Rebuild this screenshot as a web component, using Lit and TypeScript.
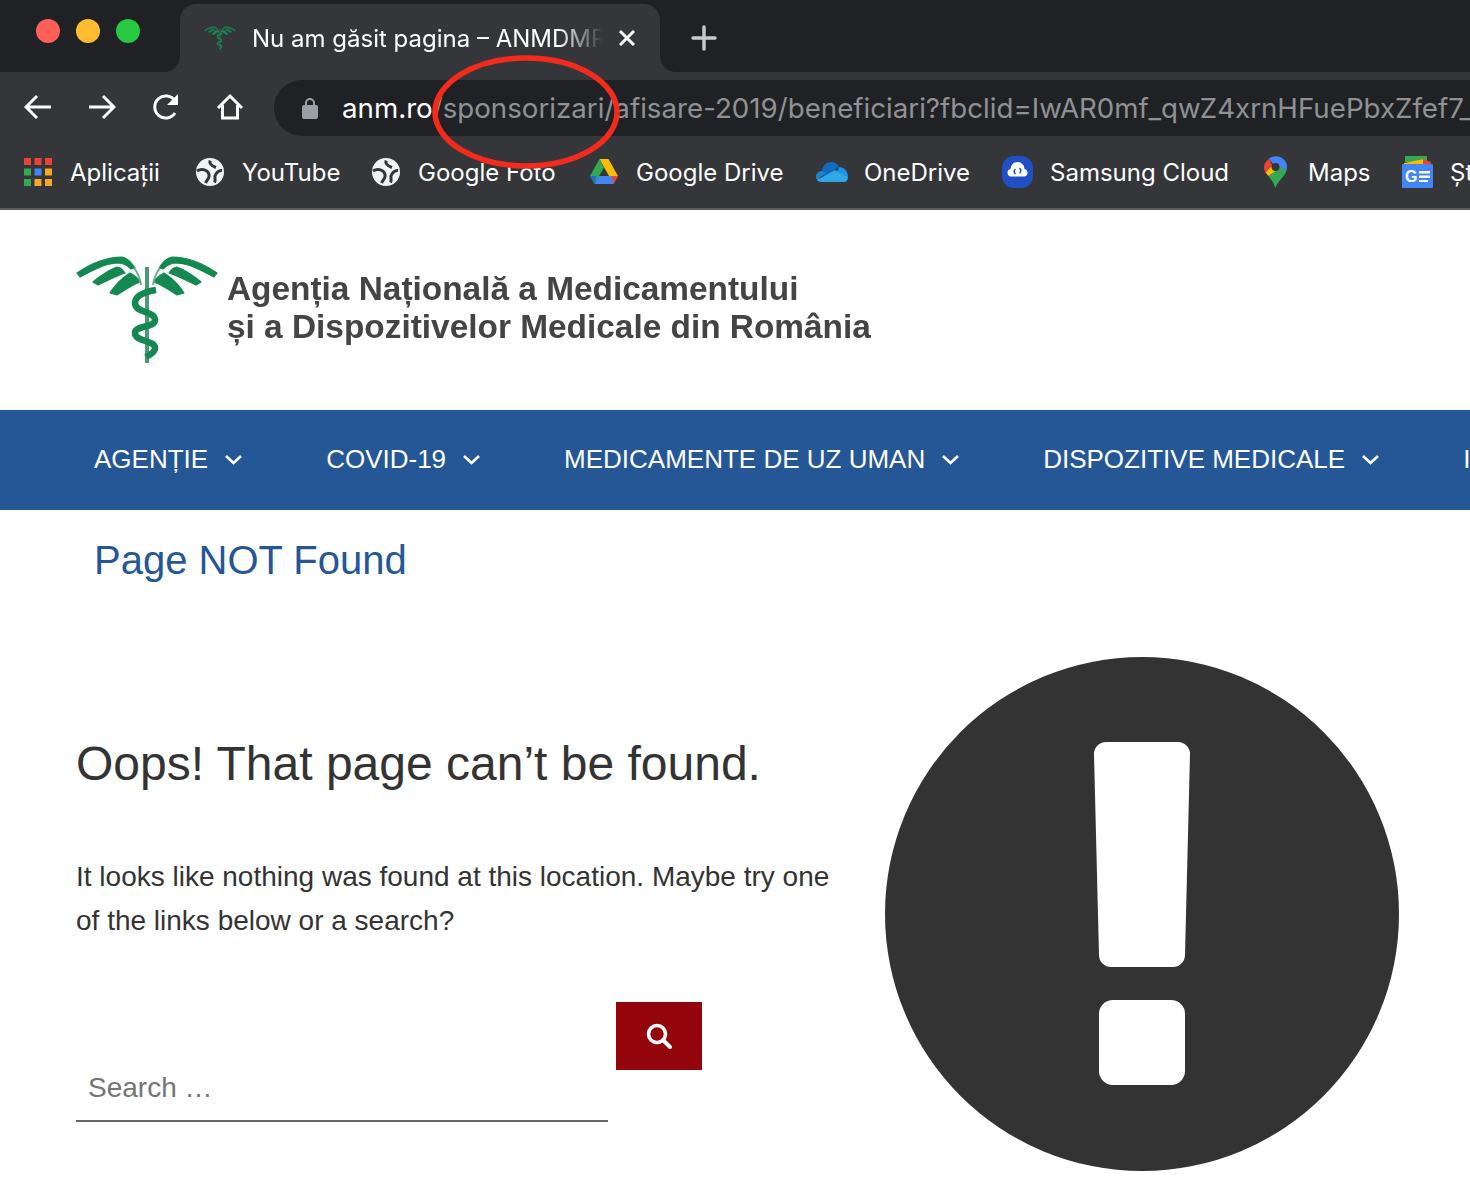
import { LitElement, html, css, svg } from "lit";
import { customElement } from "lit/decorators.js";

const globe = svg`<svg width="28" height="28" viewBox="0 0 28 28"><circle cx="14" cy="14" r="14" fill="#f1f3f4"/><g fill="none" stroke="#35363a" stroke-width="3"><path d="M1 13C6 10 12 12 13 16.500 14 20 11 22 9.500 25"/><path d="M14 2.500C13 6 16 8 20 9.500"/><path d="M26 12.500C23 12 20 15 19 18 18.500 20.500 20 21.500 18.500 24.500"/></g></svg>`;

const logoWing = svg`
<g fill="#14894f" stroke="#14894f" stroke-width="1.200" stroke-linejoin="round">
<path d="M1 18C14 9 30 2 46 2c5 1 10 6 13 11l-4 1c-4-4-8-6-14-6C28 9 15 16 4 22z"/>
<path d="M17 27C24 21 33 15 41 12c3 0 6 3 8 6-9 3-18 8-27 12z"/>
<path d="M34 38c5-8 12-15 20-20 4 2 8 5 10 9-8 3-15 8-23 13z"/>
</g>`;

const wings = (stem: string, snake: string) => svg`
  ${logoWing}
  <g transform="translate(142 0) scale(-1 1)">${logoWing}</g>
  <path d="M58 13c4 5 6 10 7 17M84 13c-4 5-6 10-7 17" fill="none" stroke="#6bab8a" stroke-width="2"/>
  <path d="M71 12v96" stroke="${stem}" stroke-width="4" fill="none"/>
  <path d="M80 35C68 37 59 41 59 48 59 58 79 56 79 65 79 73 59 70 59 78 59 87 79 85 79 93 79 98 73 100 70 102" fill="none" stroke="${snake}" stroke-width="6.500"/>
`;

const bookmarkIcons = {
  apps: svg`<svg width="28" height="28" viewBox="0 0 28 28">
    <g fill="#ea4335"><rect width="7" height="7"/><rect x="10.500" width="7" height="7"/><rect x="21" width="7" height="7"/></g>
    <rect y="10.500" width="7" height="7" fill="#34a853"/><rect x="10.500" y="10.500" width="7" height="7" fill="#4285f4"/><rect x="21" y="10.500" width="7" height="7" fill="#f5a623"/>
    <rect y="21" width="7" height="7" fill="#34a853"/><rect x="10.500" y="21" width="7" height="7" fill="#f5a623"/><rect x="21" y="21" width="7" height="7" fill="#f5a623"/>
  </svg>`,
  drive: svg`<svg width="28" height="26" viewBox="0 0 28 26"><path d="M9.500 0h9L28 17h-9z" fill="#fbbc04"/><path d="M9.500 0L0 17l4.500 8L14 8.500z" fill="#34a853"/><path d="M4.500 25h19L28 17H9z" fill="#4285f4"/><path d="M23.500 25L28 17h-6.500z" fill="#ea4335"/><path d="M4.500 25L0 17h6.500z" fill="#1a6dd0"/></svg>`,
  onedrive: svg`<svg width="32" height="20" viewBox="0 0 32 20"><path d="M6 9C7 3 11 0 15 0c4 0 7 2 8 5l-9 6-5 4z" fill="#0f6cc0"/><path d="M6 9C2 9 0 12 0 15c0 1 .5 2 1 3l9-7z" fill="#1a85d6"/><path d="M23 5c5 0 9 4 9 10l-11-5z" fill="#1c93e3"/><path d="M1 18c1 1 2 2 5 2h22c2 0 4-2 4-5L19 8z" fill="#2ea8e8"/></svg>`,
  samsung: svg`<svg width="31" height="32" viewBox="0 0 31 32"><rect width="31" height="32" rx="12" fill="#2150c4"/><path d="M9 20.500a3.800 3.800 0 0 1-.5-7.500 7 7 0 0 1 14 0 3.800 3.800 0 0 1-.5 7.500z" fill="#fff"/><path d="M13.500 18a3 3 0 0 1 0-5M17.500 12a3 3 0 0 1 0 5" fill="none" stroke="#2150c4" stroke-width="1.500"/></svg>`,
  maps: svg`<svg width="23" height="32" viewBox="0 0 23 32"><path d="M5 2.500L.8 7.500C.3 9 0 10 0 11.500c0 2 .5 3.500 1.500 5l7-6.500z" fill="#ea4335"/><path d="M5 2.500A11.500 11.500 0 0 1 19.500 3L15 8H9z" fill="#4285f4"/><path d="M19.500 3C22 5.500 23 8 23 11.500c0 1-.2 2-.5 3L15 13l-1-6z" fill="#4285f4"/><path d="M22.500 14.500c-1.500 6-8.500 10-11 17.500-2-6-5-9-7-12l11-9z" fill="#34a853"/><path d="M1.500 16.500L8 10l3.500 5-7 5z" fill="#fbbc04"/><circle cx="11.500" cy="11" r="4" fill="#35363a"/></svg>`,
  news: svg`<svg width="31" height="32" viewBox="0 0 31 32"><rect x="3" width="22" height="6" fill="#34a853"/><path d="M2 7l20-4v6H2z" fill="#fbbc04"/><path d="M21 3l8 3v4h-8z" fill="#ea4335"/><rect y="8" width="31" height="24" rx="1" fill="#4285f4"/><text x="3" y="26" class="gl">G</text><path d="M17 15h11v2.500H17zM17 19.500h11V22H17zM17 24h9v2H17z" fill="#fff"/></svg>`,
};

const bookmarks = [
  { icon: bookmarkIcons.apps, label: "Aplicații", slot: 172, iconSlot: 46 },
  { icon: globe, label: "YouTube", slot: 176, iconSlot: 46 },
  { icon: globe, label: "Google Foto", slot: 218, iconSlot: 46 },
  { icon: bookmarkIcons.drive, label: "Google Drive", slot: 226, iconSlot: 46 },
  { icon: bookmarkIcons.onedrive, label: "OneDrive", slot: 186, iconSlot: 48 },
  { icon: bookmarkIcons.samsung, label: "Samsung Cloud", slot: 262, iconSlot: 48 },
  { icon: bookmarkIcons.maps, label: "Maps", slot: 138, iconSlot: 44 },
  { icon: bookmarkIcons.news, label: "Știri", slot: 100, iconSlot: 48 },
];

@customElement("app-root")
export class AppRoot extends LitElement {
  static styles = css`
    :host { display: block; position: relative; width: 1470px; height: 1198px; overflow: hidden; background: #fff; font-family: "Liberation Sans", Arial, sans-serif; }
    .strip { height: 72px; background: #202124; display: flex; box-sizing: border-box; padding-top: 4px; }
    .lights { width: 180px; display: flex; gap: 16px; padding: 15px 0 0 36px; box-sizing: border-box; }
    .lights i { width: 24px; height: 24px; border-radius: 50%; display: block; }
    .tab { position: relative; width: 480px; height: 68px; background: #35363a; border-radius: 16px 16px 0 0; display: flex; align-items: center; box-sizing: border-box; padding: 0 0 0 24px; color: #fff; font: 24px Inter, sans-serif; }
    .tab::before, .tab::after { content: ""; position: absolute; bottom: 0; width: 16px; height: 16px; }
    .tab::before { left: -16px; background: radial-gradient(circle at 0 0, #202124 15.5px, #35363a 16.5px); }
    .tab::after { right: -16px; background: radial-gradient(circle at 100% 0, #202124 15.5px, #35363a 16.5px); }
    .tab .title { margin-left: 16px; width: 351px; white-space: nowrap; overflow: hidden; -webkit-mask-image: linear-gradient(90deg, #000 87%, transparent 100%); mask-image: linear-gradient(90deg, #000 87%, transparent 100%); }
    .tab .close { margin-left: 14px; display: block; }
    .plus { margin: 21px 0 0 31px; display: block; }
    .toolbar { height: 64px; background: #35363a; display: flex; padding: 8px 0 0 24px; box-sizing: border-box; }
    .navicons { display: flex; gap: 36px; padding-top: 13px; width: 250px; flex: none; }
    .navicons svg { display: block; }
    .url { flex: none; width: 1300px; height: 56px; background: #202124; border-radius: 28px; display: flex; align-items: center; padding-left: 28px; box-sizing: border-box; font: 27.700px Inter, sans-serif; color: #fff; white-space: nowrap; overflow: hidden; }
    .url svg { margin-right: 24px; flex: none; }
    .url span { color: #8f9194; }
    .bookmarks { height: 74px; background: #35363a; border-bottom: 2px solid #5a5b5e; box-sizing: border-box; display: flex; align-items: center; padding-left: 24px; color: #fff; font: 24px Inter, sans-serif; white-space: nowrap; overflow: hidden; }
    .bm { display: flex; align-items: center; flex: none; position: relative; }
    .bm .ic { flex: none; display: flex; }
    .bm svg { display: block; flex: none; }
    .gl { font: 700 16px "Liberation Sans", sans-serif; fill: #fff; }
    .logo { height: 200px; display: flex; padding: 45px 0 0 76px; box-sizing: border-box; }
    .logo svg { flex: none; display: block; filter: blur(.6px); }
    .logotext { margin: 15px 0 0 9px; font-weight: 700; font-size: 33.400px; line-height: 38px; color: #444; filter: blur(.6px); white-space: nowrap; }
    nav { height: 100px; background: #255796; display: flex; align-items: center; padding: 0 0 2px 94px; box-sizing: border-box; color: #fff; font-size: 26px; white-space: nowrap; overflow: hidden; }
    .ni { display: flex; align-items: center; gap: 16px; margin-right: 83px; flex: none; }
    .ni svg { display: block; }
    .pt { margin: 0; padding: 25px 0 0 94px; font-weight: 400; font-size: 40px; line-height: 50px; color: #255796; }
    .main { display: flex; padding: 72px 0 0 76px; }
    .left { width: 809px; flex: none; padding-top: 74px; color: #333; }
    h2 { margin: 0; font-weight: 400; font-size: 48px; line-height: 66px; }
    p { margin: 58px 0 0; font-size: 28px; line-height: 44px; width: 770px; }
    .search { display: flex; align-items: flex-start; gap: 8px; margin-top: 59px; }
    .input { width: 532px; height: 120px; box-sizing: border-box; border-bottom: 2px solid #666; padding: 64px 0 0 12px; font-size: 28px; line-height: 44px; color: #757575; }
    .btn { width: 86px; height: 68px; background: #94040b; display: flex; align-items: center; justify-content: center; }
    .big { display: block; flex: none; }
    .ring { position: absolute; left: 0; top: 0; pointer-events: none; }
  `;

  render() {
    return html`
      <div class="strip">
        <div class="lights"><i style="background:#ff5f57"></i><i style="background:#febc2e"></i><i style="background:#28c840"></i></div>
        <div class="tab">
          <svg width="32" height="25" viewBox="0 0 142 112">${wings("#17874f", "#17874f")}</svg>
          <div class="title">Nu am găsit pagina – ANMDMR</div>
          <svg class="close" width="20" height="20" viewBox="0 0 20 20"><path d="M3 3l14 14M17 3L3 17" stroke="#fff" stroke-width="3"/></svg>
        </div>
        <svg class="plus" width="26" height="26" viewBox="0 0 26 26"><path d="M13 2v22M2 13h22" stroke="#c8cacc" stroke-width="3.400" stroke-linecap="round"/></svg>
      </div>
      <div class="toolbar">
        <div class="navicons">
          <svg width="28" height="28" viewBox="0 0 28 28"><path d="M27 14H3M13 3L2 14l11 11" fill="none" stroke="#fff" stroke-width="3"/></svg>
          <svg width="28" height="28" viewBox="0 0 28 28"><path d="M1 14h24M15 3l11 11-11 11" fill="none" stroke="#fff" stroke-width="3"/></svg>
          <svg width="28" height="28" viewBox="0 0 28 28"><path d="M23 20a11 11 0 1 1 0-12" fill="none" stroke="#fff" stroke-width="3"/><path d="M26 1v11H15z" fill="#fff"/></svg>
          <svg width="28" height="28" viewBox="0 0 28 28"><path d="M2 15L14 3l12 12M6.500 12v13h15V12" fill="none" stroke="#fff" stroke-width="3"/></svg>
        </div>
        <div class="url">
          <svg width="16" height="22" viewBox="0 0 16 22"><path d="M4 9V6a4 4 0 0 1 8 0v3" fill="none" stroke="#9aa0a6" stroke-width="2"/><rect y="8" width="16" height="14" rx="2" fill="#9aa0a6"/></svg>
          anm.ro<span>/sponsorizari/afisare-2019/beneficiari?fbclid=IwAR0mf_qwZ4xrnHFuePbxZfef7_</span>
        </div>
      </div>
      <div class="bookmarks">
        ${bookmarks.map((b) => html`<div class="bm" style="width:${b.slot}px"><span class="ic" style="width:${b.iconSlot}px">${b.icon}</span>${b.label}</div>`)}
      </div>
      <div class="logo">
        <svg width="142" height="112" viewBox="0 0 142 112">${wings("#4f9878", "#14894f")}</svg>
        <div class="logotext">Agenția Națională a Medicamentului<br>și a Dispozitivelor Medicale din România</div>
      </div>
      <nav>
        ${["AGENȚIE", "COVID-19", "MEDICAMENTE DE UZ UMAN", "DISPOZITIVE MEDICALE", "INFORMAȚII"].map(
          (t) => html`<div class="ni">${t}<svg width="19" height="11" viewBox="0 0 19 11"><path d="M2 2l7.500 7L17 2" fill="none" stroke="#fff" stroke-width="2.600"/></svg></div>`
        )}
      </nav>
      <h1 class="pt">Page NOT Found</h1>
      <div class="main">
        <div class="left">
          <h2>Oops! That page can’t be found.</h2>
          <p>It looks like nothing was found at this location. Maybe try one of the links below or a search?</p>
          <div class="search">
            <div class="input">Search …</div>
            <div class="btn"><svg width="28" height="28" viewBox="0 0 28 28"><circle cx="12" cy="12" r="8.500" fill="none" stroke="#fff" stroke-width="3.600"/><path d="M18 18l7 7" stroke="#fff" stroke-width="4" stroke-linecap="round"/></svg></div>
          </div>
        </div>
        <svg class="big" width="514" height="514" viewBox="0 0 514 514">
          <circle cx="257" cy="257" r="257" fill="#333"/>
          <path d="M221 85h72a12 12 0 0 1 12 12l-5 201a12 12 0 0 1-12 12h-62a12 12 0 0 1-12-12l-5-201a12 12 0 0 1 12-12z" fill="#fff"/>
          <rect x="214" y="343" width="86" height="85" rx="14" fill="#fff"/>
        </svg>
      </div>
      <svg class="ring" width="1470" height="200" viewBox="0 0 1470 200"><ellipse cx="526" cy="112" rx="91" ry="54" fill="none" stroke="#f42a1c" stroke-width="5.500"/></svg>
    `;
  }
}
